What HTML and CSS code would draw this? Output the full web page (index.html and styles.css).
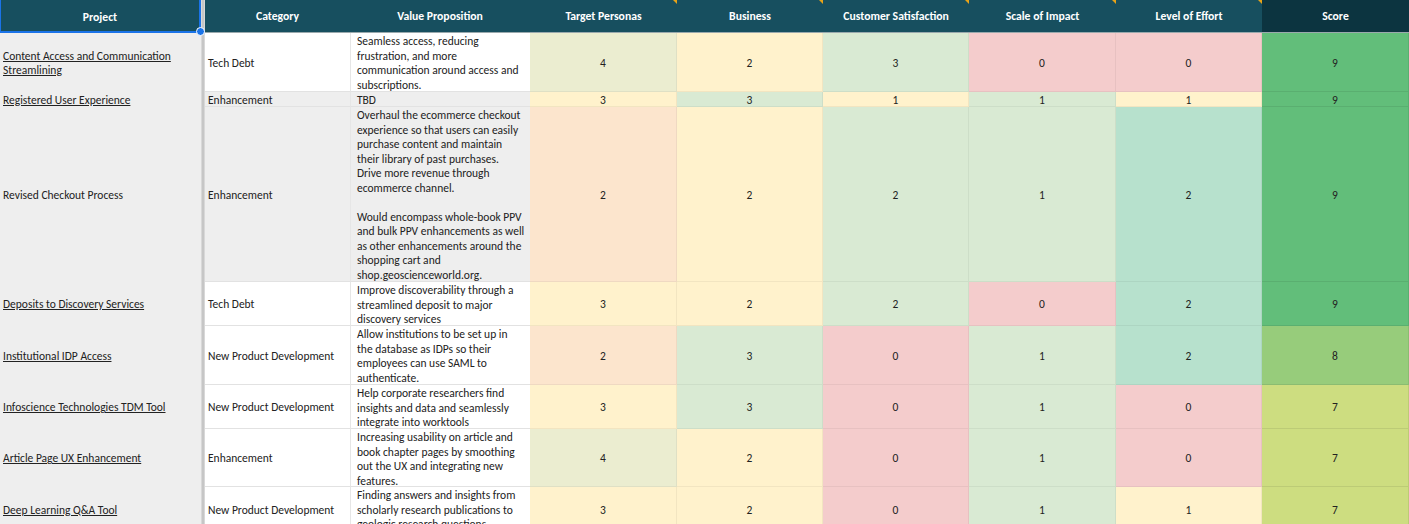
FILE: index.html
```html
<!DOCTYPE html>
<html>
<head>
<meta charset="utf-8">
<link rel="stylesheet" href="styles.css">
</head>
<body>
<div class="sheet">
  <div class="freeze"></div>

  <div class="hd hd-project"><span>Project</span><i class="dot"></i></div>
  <div class="hd">Category</div>
  <div class="hd">Value Proposition</div>
  <div class="hd note">Target Personas</div>
  <div class="hd note">Business</div>
  <div class="hd note">Customer Satisfaction</div>
  <div class="hd note">Scale of Impact</div>
  <div class="hd note">Level of Effort</div>
  <div class="hd hd-score">Score</div>

  <div class="proj"><a>Content Access and Communication Streamlining</a></div>
  <div class="cat">Tech Debt</div>
  <div class="val">Seamless access, reducing frustration, and more communication around access and subscriptions.</div>
  <div class="n c4">4</div><div class="n cy">2</div><div class="n cg">3</div><div class="n cr">0</div><div class="n cr">0</div><div class="n s9">9</div>

  <div class="proj"><a>Registered User Experience</a></div>
  <div class="cat grey">Enhancement</div>
  <div class="val grey">TBD</div>
  <div class="n cy">3</div><div class="n cg">3</div><div class="n cy">1</div><div class="n cg">1</div><div class="n cy">1</div><div class="n s9">9</div>

  <div class="proj">Revised Checkout Process</div>
  <div class="cat grey">Enhancement</div>
  <div class="val grey">Overhaul the ecommerce checkout experience so that users can easily purchase content and maintain their library of past purchases. Drive more revenue through ecommerce channel.<br><br>Would encompass whole-book PPV and bulk PPV enhancements as well as other enhancements around the shopping cart and shop.geoscienceworld.org.</div>
  <div class="n co">2</div><div class="n cy">2</div><div class="n cg">2</div><div class="n cg">1</div><div class="n ct">2</div><div class="n s9">9</div>

  <div class="proj"><a>Deposits to Discovery Services</a></div>
  <div class="cat">Tech Debt</div>
  <div class="val">Improve discoverability through a streamlined deposit to major discovery services</div>
  <div class="n cy">3</div><div class="n cy">2</div><div class="n cg">2</div><div class="n cr">0</div><div class="n ct">2</div><div class="n s9">9</div>

  <div class="proj"><a>Institutional IDP Access</a></div>
  <div class="cat">New Product Development</div>
  <div class="val">Allow institutions to be set up in the database as IDPs so their employees can use SAML to authenticate.</div>
  <div class="n co">2</div><div class="n cg">3</div><div class="n cr">0</div><div class="n cg">1</div><div class="n ct">2</div><div class="n s8">8</div>

  <div class="proj"><a>Infoscience Technologies TDM Tool</a></div>
  <div class="cat">New Product Development</div>
  <div class="val">Help corporate researchers find insights and data and seamlessly integrate into worktools</div>
  <div class="n cy">3</div><div class="n cg">3</div><div class="n cr">0</div><div class="n cg">1</div><div class="n cr">0</div><div class="n s7">7</div>

  <div class="proj"><a>Article Page UX Enhancement</a></div>
  <div class="cat">Enhancement</div>
  <div class="val">Increasing usability on article and book chapter pages by smoothing out the UX and integrating new features.</div>
  <div class="n c4">4</div><div class="n cy">2</div><div class="n cr">0</div><div class="n cg">1</div><div class="n cr">0</div><div class="n s7">7</div>

  <div class="proj"><a>Deep Learning Q&amp;A Tool</a></div>
  <div class="cat">New Product Development</div>
  <div class="val">Finding answers and insights from scholarly research publications to geologic research questions.</div>
  <div class="n cy">3</div><div class="n cy">2</div><div class="n cr">0</div><div class="n cg">1</div><div class="n cy">1</div><div class="n s7">7</div>
</div>
</body>
</html>
```
FILE: styles.css
```css
html, body {
  margin: 0;
  padding: 0;
  background: #ffffff;
  overflow: hidden;
}

body {
  height: 524px;
}

.sheet {
  display: grid;
  grid-template-columns: 201px 4px 145px 180px 147px 146px 146px 147px 146px 147px;
  grid-template-rows: 33px 59px 15px 175px 44px 59px 44px 58px 45px;
  width: 1409px;
  font-family: Carlito, Lato, "Liberation Sans", sans-serif;
  font-size: 11.5px;
  color: #222222;
}

.freeze {
  grid-column: 2;
  grid-row: 1 / -1;
  background: #c6c6c6;
  border-left: 1px solid #d8d8d8;
  border-right: 1px solid #d8d8d8;
}

.hd {
  background: #174f5f;
  color: #ffffff;
  font-weight: 700;
  font-size: 11.7px;
  display: flex;
  align-items: center;
  justify-content: center;
  position: relative;
  border-bottom: 1px solid #9aa9ad;
  box-sizing: border-box;
}

.hd-score {
  background: #0c3440;
}

.hd-project {
  border: 2px solid #1a73e8;
  border-top: none;
  border-left: 1px solid #1a73e8;
  padding-top: 2px;
}

.dot {
  position: absolute;
  right: -6px;
  bottom: -5px;
  width: 7px;
  height: 7px;
  border-radius: 50%;
  background: #1a73e8;
  border: 1px solid #ffffff;
  z-index: 2;
}

.note::after {
  content: "";
  position: absolute;
  top: 0;
  right: 0;
  width: 0;
  height: 0;
  border-top: 4px solid #e8a317;
  border-left: 4px solid transparent;
}

.proj {
  background: #eeeeee;
  display: flex;
  align-items: center;
  padding: 1px 3px 0;
  line-height: 14.5px;
}

.proj a {
  color: #222222;
  text-decoration: underline;
}

.cat {
  display: flex;
  align-items: center;
  padding: 1px 3px 0;
  border-bottom: 1px solid #e2e2e2;
  box-sizing: border-box;
  white-space: nowrap;
}

.val {
  padding: 1px 5px 0 6px;
  line-height: 14.5px;
  border-left: 1px solid #e6e6e6;
  border-bottom: 1px solid #e2e2e2;
  box-sizing: border-box;
  overflow: hidden;
}

.grey {
  background: #eeeeee;
}

.n {
  display: flex;
  align-items: center;
  justify-content: center;
  padding-top: 1px;
  border-right: 1px solid rgba(0, 0, 0, 0.05);
  border-bottom: 1px solid rgba(0, 0, 0, 0.05);
  box-sizing: border-box;
}

.c4 { background: #ebedd0; }
.cy { background: #fff2cc; }
.cg { background: #d9ead3; }
.cr { background: #f4cccc; }
.co { background: #fce5cd; }
.ct { background: #b7e1cd; }

.s9 { background: #62be7a; border-color: rgba(0, 0, 0, 0.08); }
.s8 { background: #97cc7b; border-color: rgba(0, 0, 0, 0.08); }
.s7 { background: #cddd80; border-color: rgba(0, 0, 0, 0.08); }
```
